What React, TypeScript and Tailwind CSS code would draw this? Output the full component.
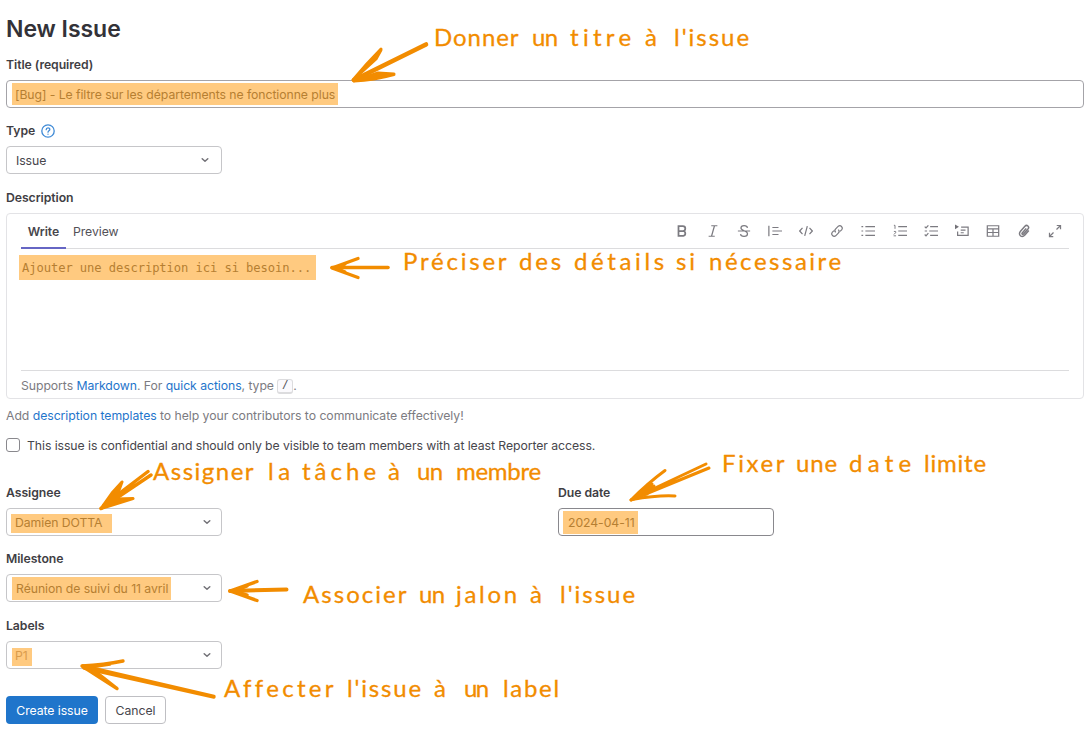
import React from "react";

type Word = [text: string, x: number, width: number];

const ink = "#f28c00";

function Note({ y, words }: { y: number; words: Word[] }) {
  return (
    <text y={y} fill={ink} className="font-['Lato',sans-serif] text-[24px]" stroke={ink} strokeWidth="0.3">
      {words.map(([text, x, width], i) => (
        <React.Fragment key={i}>
          <tspan x={x} textLength={width} lengthAdjust="spacing">
            {text}
          </tspan>{" "}
        </React.Fragment>
      ))}
    </text>
  );
}

function Annotations() {
  return (
    <svg className="pointer-events-none absolute left-0 top-0" width="1090" height="732" viewBox="0 0 1090 732">
      <g fill="none" stroke={ink} strokeWidth="3" strokeLinecap="round" strokeLinejoin="round">
        <path d="M426 44.500 L354 80" strokeWidth="4.6" />
        <path d="M381 49 Q366 64 353 80 L376 59 L381 50 M394 74.500 Q374 80 354 81 L378 73 L394 74" fill={ink} />
        <path d="M388 267.500 H332" strokeWidth="3.6" />
        <path d="M358 258.500 L332 268 L358 277.500 M345 264 L336 268 L345 272" strokeWidth="3.4" />
        <path d="M148 471.500 L104 505 M151 475 L101 508.500 M131 487 L104 506" strokeWidth="3.4" />
        <path d="M122 482 L112 493 L101 508.500 L118 493 Z M133 498.500 L116 499 L101 508.500 Z" fill={ink} />
        <path d="M706 464 L636 497 M709 468 L631 500" />
        <path d="M665 470.500 Q648 483 631 500 L654 486 M675 496 Q658 495 632 499.500 L650 491" />
        <path d="M636 496 L652 484 L647 494 Z" fill={ink} />
        <path d="M286.500 589.500 L230 591" strokeWidth="4" />
        <path d="M257 581.500 L230 591 L257 600.500 M247 586 L235 591 L247 595" strokeWidth="3.4" />
        <path d="M214 697 L84 668 M214 696.500 L83 666" strokeWidth="3.400" />
        <path d="M123 661 Q104 665 82 666 L117 688.500 L96 672 M90 667 L110 664" strokeWidth="3.4" />
      </g>
      <Note y={46} words={[["Donner", 434, 84], ["un", 532, 26], ["titre", 570, 61], ["à", 645, 15], ["l'issue", 674, 75]]} />
      <Note y={269.5} words={[["Préciser", 403, 103], ["des", 519, 42], ["détails", 574, 90], ["si", 676, 19], ["nécessaire", 709, 132]]} />
      <Note y={479.5} words={[["Assigner", 153, 100], ["la", 268, 22], ["tâche", 302, 74], ["à", 388, 15], ["un", 417, 26], ["membre", 456, 85]]} />
      <Note y={472} words={[["Fixer", 722, 62], ["une", 796, 41], ["date", 849, 62], ["limite", 924, 62]]} />
      <Note y={603} words={[["Associer", 303, 103], ["un", 419, 26], ["jalon", 456, 61], ["à", 530, 15], ["l'issue", 560, 75]]} />
      <Note y={697} words={[["Affecter", 224, 109], ["l'issue", 347, 74], ["à", 434, 15], ["un", 464, 25], ["label", 503, 56]]} />
    </svg>
  );
}

function Icon({ children }: { children: React.ReactNode }) {
  return (
    <svg width="14" height="14" viewBox="0 0 16 16" fill="none" stroke="#7c7b81" strokeWidth="1.400" className="shrink-0">
      {children}
    </svg>
  );
}

function Toolbar() {
  return (
    <div className="flex items-center gap-[17.1px]">
      <Icon><path d="M4 2.500 H9 A2.700 2.700 0 0 1 9 8 H4 Z M4 8 H9.500 A2.800 2.800 0 0 1 9.500 13.500 H4 Z" strokeWidth="2" /></Icon>
      <Icon><path d="M6 2 H13 M3 14 H10 M9.700 2 L6.300 14" /></Icon>
      <Icon><path d="M1 8 H15 M12 4.500 C11.500 1 4.500 1 4.500 4.700 C4.500 8 12 7.500 12 11 C12 15 4.500 15 4 11.500" /></Icon>
      <Icon><path d="M1 2 V14 M5 4 H12 M5 8 H16 M5 12 H12" /></Icon>
      <Icon><path d="M4 4.500 L.8 8 L4 11.500 M12 4.500 L15.200 8 L12 11.500 M9.500 2.500 L6.500 13.500" /></Icon>
      <Icon><path d="M6.500 9.500 C5 8 5.500 6.500 6.500 5.500 L9.500 2.500 C12 .5 15.500 4 13.500 6.500 L11.500 8.500 M9.500 6.500 C11 8 10.500 9.500 9.500 10.500 L6.500 13.500 C4 15.500 .5 12 2.500 9.500 L4.500 7.500" /></Icon>
      <Icon><path d="M5 3 H16 M5 8 H16 M5 13 H16 M.5 3 H2.500 M.5 8 H2.500 M.5 13 H2.500" /></Icon>
      <Icon><path d="M6 3 H16 M6 8 H16 M6 13 H16" /><path d="M1 1.500 H2.300 V5.500 M1 8.500 H3 V10 L1 12 M.7 13.500 H3.500" strokeWidth="1.100" /></Icon>
      <Icon><path d="M7 3 H16 M6 8 H16 M7 13 H16 M.8 3 L2.300 4.500 L5 1.500 M.8 8 H3.500 M.8 12 L2.300 13.500 L5 10.500" /></Icon>
      <Icon><path d="M7 3.500 H15 V13 H3 V8.500 M6.500 7 H12 M6.500 10 H10" /><path d="M0 .5 L4.500 3.200 L0 6 Z" fill="#737278" stroke="none" /></Icon>
      <Icon><path d="M1.500 2 H14.500 V14 H1.500 Z M1.500 5.500 H14.500 M1.500 9.700 H14.500 M8 5.500 V14" /></Icon>
      <Icon><path d="M10.500 5 L6 10.200 C5 11.500 6.500 12.500 7.500 11.500 L12.500 5.800 C14.800 3 11.300 .2 9 2.500 L4 8.300 C.5 12.200 5.500 16.500 9 12.500 L13.500 7.500" strokeWidth="1.700" /></Icon>
      <Icon><path d="M10 1.700 H14.300 V6 M14 2 L9.700 6.300 M6 14.300 H1.700 V10 M2 14 L6.300 9.700" /></Icon>
    </div>
  );
}

function Chevron() {
  return (
    <svg width="8" height="6" viewBox="0 0 8 6" fill="none" stroke="#737278" strokeWidth="1.500" strokeLinecap="round" strokeLinejoin="round">
      <path d="M1.200 1.700 L4 4.300 L6.800 1.700" />
    </svg>
  );
}

function Label({ children }: { children: React.ReactNode }) {
  return <div className="flex h-4 items-center pt-px text-[12.25px] font-semibold text-[#3f3e44]">{children}</div>;
}

const select = "flex h-7 w-[216px] items-center rounded-[4px] border border-[#c6c6c9] pr-[10px]";
const mark = "flex items-center whitespace-nowrap bg-[#ffca80] text-[#b67f32]";

export default function App() {
  return (
    <div className="relative h-[732px] w-[1090px] overflow-hidden bg-white pl-[6px] pr-[6px] pt-[14px] font-['Inter',sans-serif] text-[12.25px] tracking-[-0.07px] text-[#47464c]">
      <h1 className="h-[30px] text-[23px] font-semibold leading-[30px] tracking-[-0.05px] text-[#333238]">New Issue</h1>
      <div className="mt-[13px]"><Label>Title (required)</Label></div>
      <div className="mt-[7px] flex h-[28px] items-center rounded-[4px] border border-[#a4a3a8] pl-[5px]">
        <div className={`${mark} h-[22px] w-[326px] pl-[3px] pt-0.5`}>[Bug] - Le filtre sur les départements ne fonctionne plus</div>
      </div>

      <div className="mt-[15px]">
        <Label>
          Type
          <svg className="-mt-px ml-[6px]" width="14" height="14" viewBox="0 0 14 14" fill="none" stroke="#3f8ad6" strokeWidth="1.300" strokeLinecap="round">
            <circle cx="7" cy="7" r="6.200" />
            <path d="M5.200 5.700 C5.200 3.300 8.900 3.400 8.800 5.500 C8.800 6.800 7 6.800 7 8.200 M7 10.100 V10.200" />
          </svg>
        </Label>
      </div>
      <div className={`${select} mt-[7px] pl-[9px]`}>
        <span className="flex-1 pt-0.5">Issue</span>
        <div className="mr-[2px]"><Chevron /></div>
      </div>

      <div className="mt-[16px]"><Label>Description</Label></div>
      <div className="mt-[7px] flex h-[186px] flex-col rounded-[4px] border border-[#e3e3e6] px-[14px]">
        <div className="flex h-[35px] items-stretch justify-between border-b border-[#dcdcde]">
          <div className="flex">
            <div className="-mb-px flex w-[45px] items-center justify-center border-b-2 border-[#6666c4] pt-[3px] font-semibold">Write</div>
            <div className="flex items-center pl-[7px] pt-[2px] text-[#535158]">Preview</div>
          </div>
          <div className="mr-[7px] flex items-center"><Toolbar /></div>
        </div>
        <div className="-ml-[2px] flex-1 pt-[6px]">
          <div className={`${mark} h-[25px] w-[297px] pl-[3px] pt-px font-['DejaVu_Sans_Mono',monospace] text-[12.15px] tracking-[-0.08px]`}>Ajouter une description ici si besoin...</div>
        </div>
        <div className="flex h-[28px] items-center whitespace-pre border-t border-[#dcdcde] pt-[3px] text-[#7c7b81]">
          Supports <span className="text-[#1f75cb]">Markdown</span>. For <span className="text-[#1f75cb]">quick actions</span>, type{" "}
          <kbd className="flex h-[15px] w-4 items-center justify-center rounded-[3px] border border-b-2 border-[#dcdcde] bg-[#fbfafd] font-['DejaVu_Sans_Mono',monospace] text-[11px] text-[#535158]">/</kbd>.
        </div>
      </div>

      <div className="mt-[9px] h-4 leading-4 tracking-[-0.05px] text-[#7c7b81]">
        Add <span className="text-[#1f75cb]">description templates</span> to help your contributors to communicate effectively!
      </div>
      <div className="mt-[13px] flex h-4 items-center">
        <span className="h-[14px] w-[14px] rounded-[3px] border border-[#89888d]" />
        <span className="ml-[7px] pt-0.5">This issue is confidential and should only be visible to team members with at least Reporter access.</span>
      </div>

      <div className="mt-[32px] flex">
        <div className="w-[552px]">
          <Label>Assignee</Label>
          <div className={`${select} mt-[7px] justify-between pl-1`}>
            <div className={`${mark} mt-[3px] h-[19px] w-[101px] pb-px pl-1`}>Damien DOTTA</div>
            <Chevron />
          </div>
        </div>
        <div>
          <Label>Due date</Label>
          <div className="mt-[7px] flex h-7 w-[216px] items-center rounded-[4px] border border-[#89888d] pl-1">
            <div className={`${mark} mt-px h-[23px] w-[75px] pl-[5px] pt-px`}>2024-04-11</div>
          </div>
        </div>
      </div>

      <div className="mt-[15px]"><Label>Milestone</Label></div>
      <div className={`${select} mt-[7px] justify-between pl-[5px]`}>
        <div className={`${mark} h-[23px] w-[159px] pl-1 pt-0.5`}>Réunion de suivi du 11 avril</div>
        <Chevron />
      </div>

      <div className="mt-[16px]"><Label>Labels</Label></div>
      <div className={`${select} mt-[7px] justify-between pl-[5px]`}>
        <div className="mt-[3px] flex h-[18px] w-5 items-center bg-[#ffca80] pb-px pl-[3px] text-[#d99b4c]">P1</div>
        <Chevron />
      </div>

      <div className="mt-[27px] flex gap-[7px]">
        <button className="h-7 w-[92px] rounded-[4px] bg-[#1f75cb] pt-0.5 text-white">Create issue</button>
        <button className="h-7 w-[61px] rounded-[4px] border border-[#bfbfc3] pt-0.5">Cancel</button>
      </div>
      <Annotations />
    </div>
  );
}
